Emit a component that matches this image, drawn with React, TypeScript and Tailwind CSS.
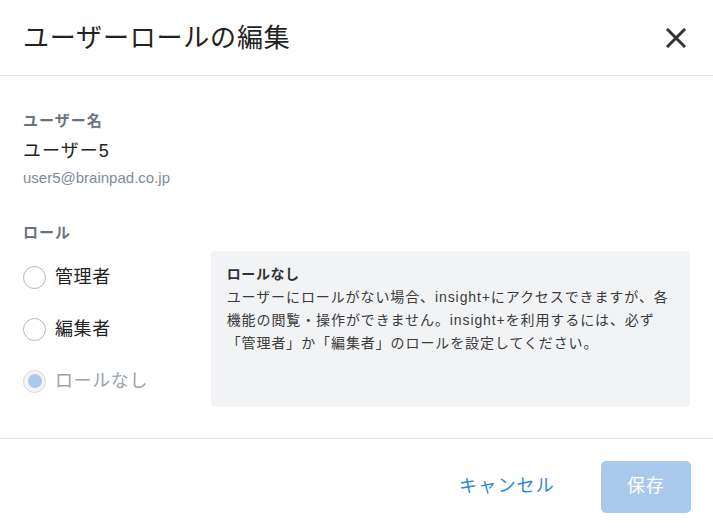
import React from "react";

const font = { fontFamily: '"Liberation Sans", "Noto Sans CJK JP", sans-serif' };

type RoleOption = { label: string; disabled?: boolean; checked?: boolean };

const roles: RoleOption[] = [
  { label: "管理者" },
  { label: "編集者" },
  { label: "ロールなし", disabled: true, checked: true },
];

const Radio: React.FC<RoleOption> = ({ label, disabled, checked }) => (
  <label className="flex h-[52px] items-center gap-[9px]">
    <span
      className={
        disabled
          ? "flex h-[23px] w-[23px] items-center justify-center rounded-full border border-[#d6d8db] bg-[#f4f5f6]"
          : "flex h-[23px] w-[23px] items-center justify-center rounded-full border border-[#b3b8be] bg-white"
      }
    >
      {checked && <span className="h-[14px] w-[14px] rounded-full bg-[#a9c9ec]" />}
    </span>
    <span
      className={
        disabled
          ? "text-[18px] tracking-[0.6px] text-[#9aa3ad]"
          : "text-[18px] tracking-[0.6px] text-[#222]"
      }
    >
      {label}
    </span>
  </label>
);

const App: React.FC = () => {
  return (
    <div className="h-[528px] w-[713px] bg-white" style={font}>
      <div className="flex h-[76px] items-center justify-between border-b border-[#e2e2e2] pl-[23px] pr-[27px]">
        <h1 className="text-[26px] leading-none tracking-[0.8px] text-[#222]">ユーザーロールの編集</h1>
        <button className="flex h-[20px] w-[20px] items-center justify-center">
          <svg width="20" height="20" viewBox="0 0 20 20">
            <path d="M2 2 L18 18 M18 2 L2 18" stroke="#333" strokeWidth="3" strokeLinecap="square" />
          </svg>
        </button>
      </div>

      <div className="px-[23px] pt-[35px] pb-[31px]">
        <div className="text-[15px] font-bold leading-[20px] tracking-[1px] text-[#6b747e]">ユーザー名</div>
        <div className="mt-2 text-[18px] leading-[24px] tracking-[1px] text-[#222]">ユーザー5</div>
        <div className="mt-[6px] text-[15px] leading-[18px] text-[#7f8b97]">user5@brainpad.co.jp</div>

        <div className="mt-9 text-[15px] font-bold leading-[20px] tracking-[1px] text-[#6b747e]">ロール</div>

        <div className="mt-2 flex">
          <div className="w-[188px]">
            {roles.map((r) => (
              <Radio key={r.label} {...r} />
            ))}
          </div>
          <div className="h-[156px] w-[480px] rounded-[4px] bg-[#f2f3f5] px-4 pt-3">
            <div className="text-[14px] font-bold leading-[23px] tracking-[0.6px] text-[#333]">ロールなし</div>
            <p className="whitespace-nowrap text-[14px] leading-[23px] tracking-[0.9px] text-[#3a3a3a]">
              ユーザーにロールがない場合、insight+にアクセスできますが、各
              <br />
              機能の閲覧・操作ができません。insight+を利用するには、必ず
              <br />
              「管理者」か「編集者」のロールを設定してください。
            </p>
          </div>
        </div>
      </div>

      <div className="flex h-[90px] items-center justify-end gap-[46px] border-t border-[#e2e2e2] pt-[6px] pr-[22px]">
        <button className="text-[18px] tracking-[1.2px] text-[#2b8ae0]">キャンセル</button>
        <button className="h-[52px] w-[90px] rounded-[5px] bg-[#a9c9ec] text-[18px] tracking-[1px] text-white">保存</button>
      </div>
    </div>
  );
};

export default App;
